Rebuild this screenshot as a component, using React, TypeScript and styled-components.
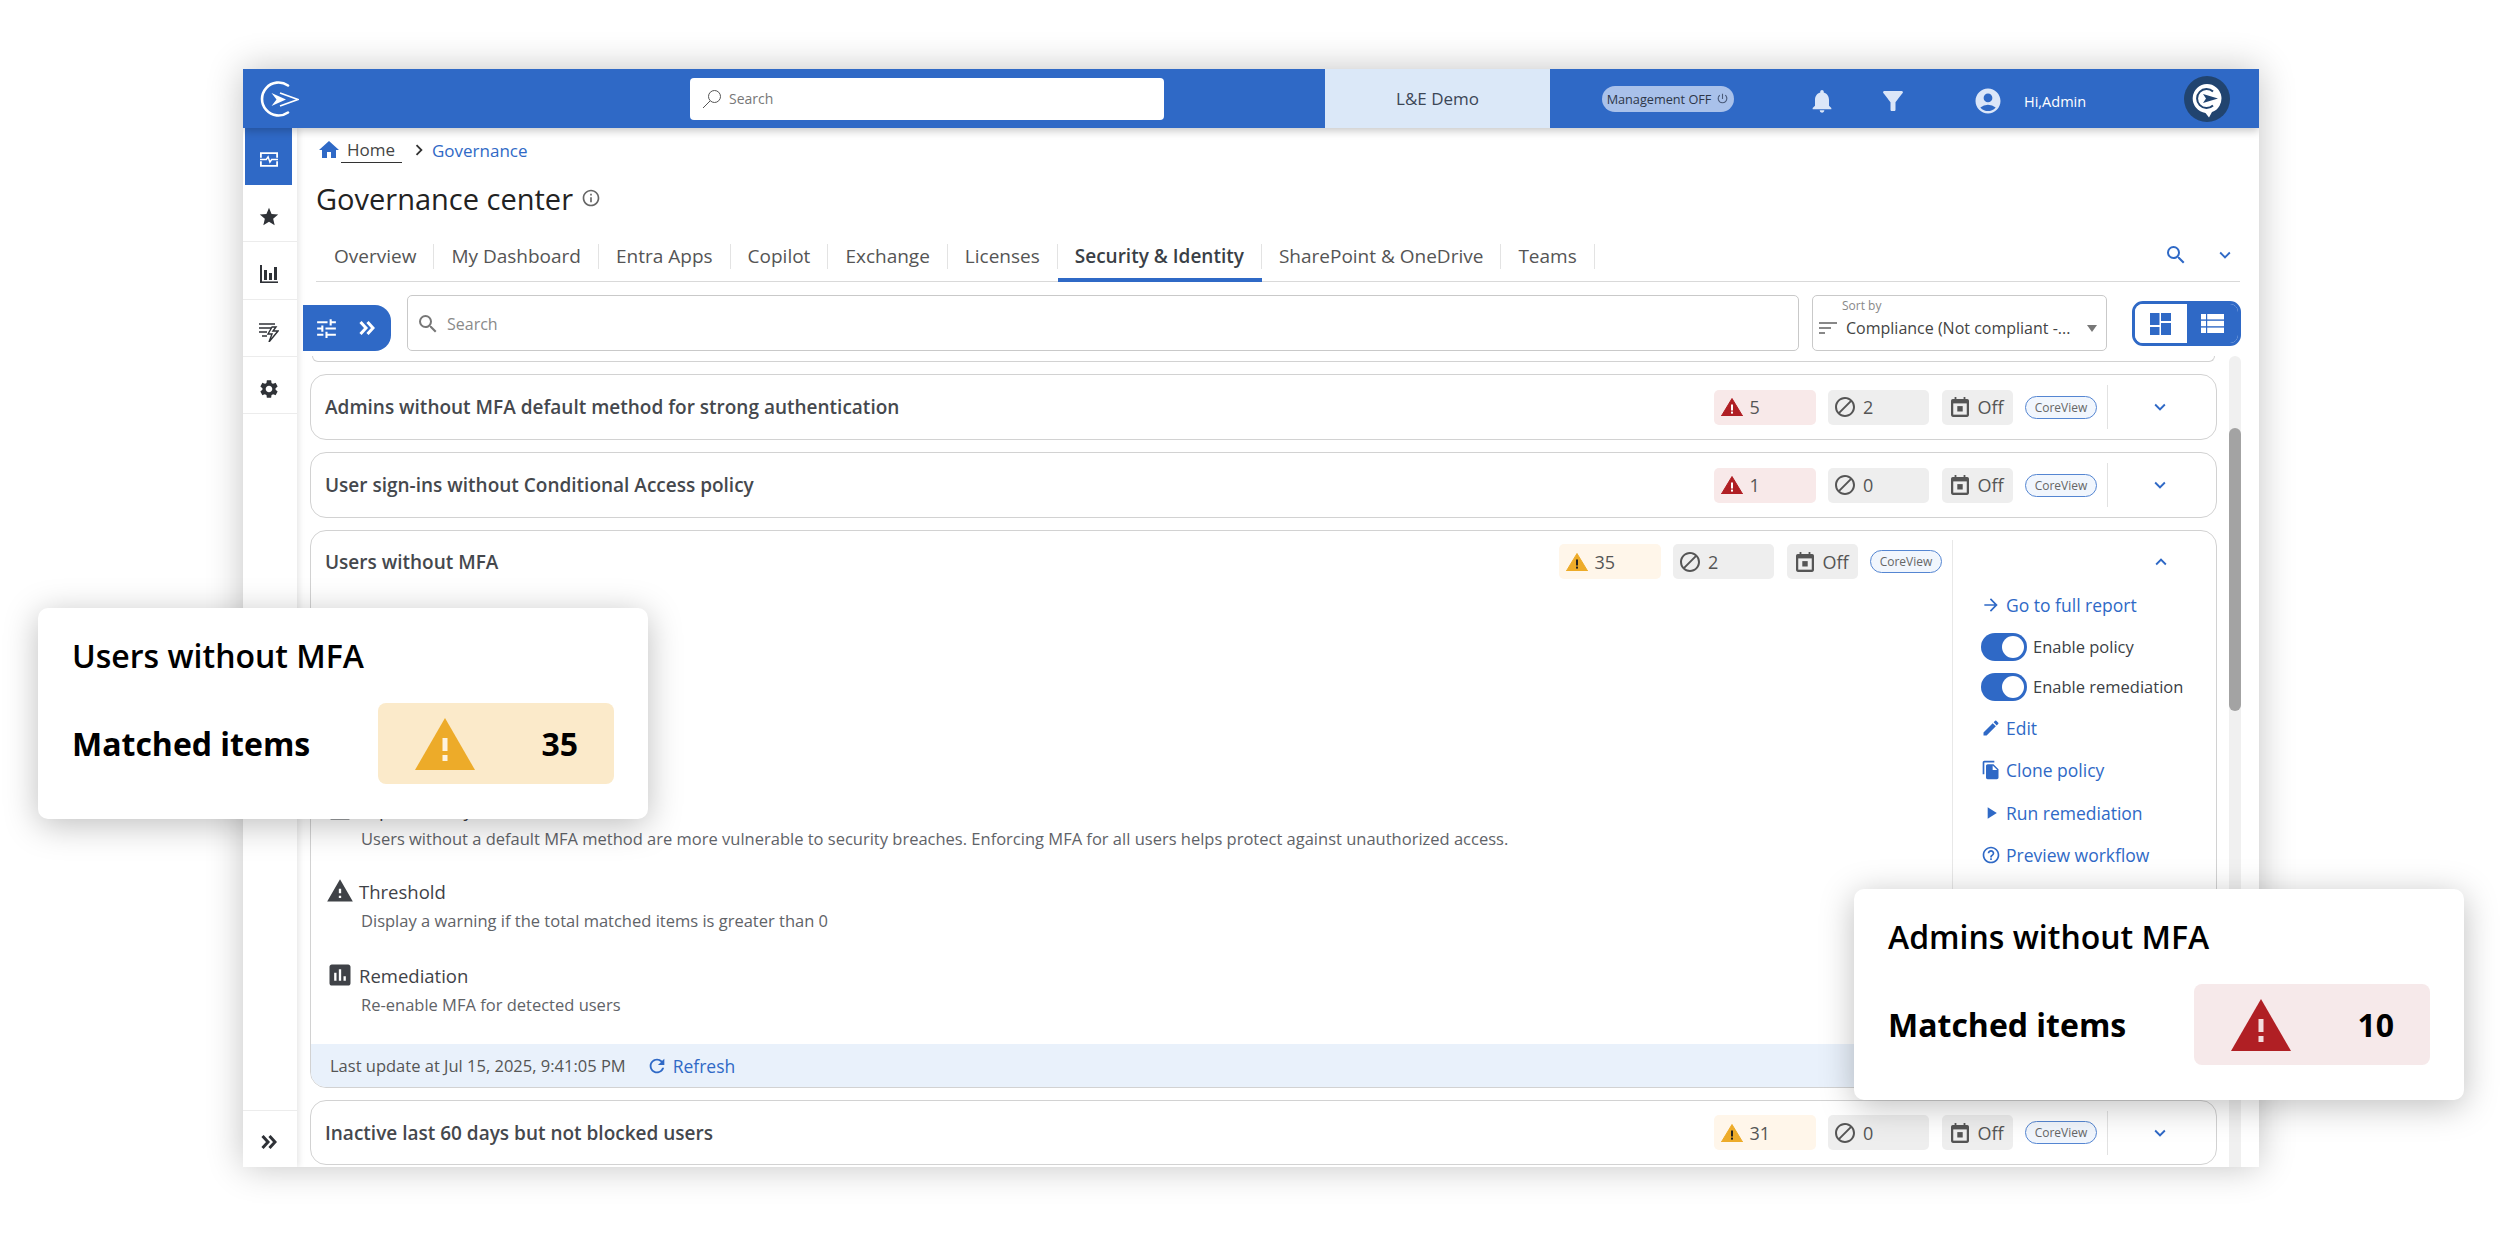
import React from "react";
import styled, { createGlobalStyle } from "styled-components";
import {
  MdHome, MdStar, MdSettings, MdNotifications, MdAccountCircle, MdEdit, MdFileCopy, MdPlayArrow,
  MdHelpOutline, MdArrowForward, MdRefresh, MdTune, MdSearch, MdFilterAlt,
  MdExpandMore, MdExpandLess, MdChevronRight, MdInfoOutline, MdAssessment, MdSort, MdBlock,
  MdPowerSettingsNew, MdWarning, MdArticle,
} from "react-icons/md";

const BLUE = "#2f69c6";

const Global = createGlobalStyle`
  html, body { margin: 0; padding: 0; background: #fff; }
  body { font-family: "Open Sans", "Liberation Sans", sans-serif; color: #333; }
  * { box-sizing: border-box; }
  svg { flex: none; }
`;

const Page = styled.div`
  position: relative;
  width: 2502px;
  height: 1236px;
  padding: 69px 0 0 243px;
  overflow: hidden;
  background: #fff;
`;
const Window = styled.div`
  width: 2016px;
  height: 1098px;
  display: flex;
  flex-direction: column;
  background: #fff;
  overflow: hidden;
  box-shadow: 0 0 34px rgba(0, 0, 0, 0.24);
`;
const TopBar = styled.header`
  position: relative;
  z-index: 3;
  flex: none;
  height: 59px;
  display: flex;
  align-items: center;
  background: ${BLUE};
  box-shadow: 0 3px 8px rgba(0, 0, 0, 0.22);
`;
const LogoBox = styled.div`
  width: 447px;
  padding-left: 16px;
  display: flex;
  align-items: center;
`;
const TopSearch = styled.div`
  width: 474px;
  height: 42px;
  background: #fff;
  border-radius: 4px;
  display: flex;
  align-items: center;
  gap: 7px;
  padding-left: 12px;
  font-size: 14px;
  color: #777;
`;
const Tenant = styled.div`
  margin-left: 161px;
  width: 225px;
  align-self: stretch;
  background: #dbe8f8;
  display: flex;
  align-items: center;
  justify-content: center;
  font-size: 17px;
  color: #3b4656;
`;
const MgmtPill = styled.div`
  margin-left: 52px;
  width: 132px;
  height: 26px;
  border-radius: 13px;
  background: #a9c1ea;
  display: flex;
  align-items: center;
  justify-content: center;
  gap: 5px;
  font-size: 12.7px;
  color: #2c3648;
  white-space: nowrap;
`;
const TopIcon = styled.div<{ $ml: number }>`
  margin-left: ${(p) => p.$ml}px;
  width: 28px;
  height: 32px;
  padding-top: 4px;
  display: flex;
  align-items: center;
  justify-content: center;
  color: #dbe6f8;
`;
const Hi = styled.div`
  margin-left: 22px;
  font-size: 14.5px;
  color: #fff;
  padding-top: 6px;
`;
const Avatar = styled.div`
  margin-left: auto;
  margin-right: 29px;
  width: 46px;
  height: 46px;
  border-radius: 50%;
  background: #21446f;
  display: flex;
  align-items: center;
  justify-content: center;
  padding-top: 3px;
`;
const Body = styled.div`
  flex: 1;
  min-height: 0;
  display: flex;
`;
const Sidebar = styled.nav`
  position: relative;
  z-index: 2;
  flex: none;
  width: 54px;
  display: flex;
  flex-direction: column;
  background: #fff;
  box-shadow: 2px 0 6px rgba(0, 0, 0, 0.1);
`;
const SideItem = styled.div<{ $active?: boolean }>`
  flex: none;
  height: 57.2px;
  margin-left: ${(p) => (p.$active ? "2px" : "0")};
  width: ${(p) => (p.$active ? "47px" : "54px")};
  padding: ${(p) => (p.$active ? "6px 0 0 0" : "8px 3px 0 0")};
  display: flex;
  align-items: center;
  justify-content: center;
  background: ${(p) => (p.$active ? BLUE : "transparent")};
  border-bottom: ${(p) => (p.$active ? "none" : "1px solid #ececec")};
  color: ${(p) => (p.$active ? "#fff" : "#2f3237")};
`;
const SideSpacer = styled.div`
  flex: 1;
`;
const SideFoot = styled.div`
  flex: none;
  height: 57px;
  border-top: 1px solid #ececec;
  padding: 6px 3px 0 0;
  display: flex;
  align-items: center;
  justify-content: center;
  color: #2f3237;
`;
const Main = styled.main`
  flex: 1;
  min-width: 0;
  display: flex;
  flex-direction: column;
`;
const Breadcrumb = styled.div`
  flex: none;
  height: 44px;
  padding-left: 20px;
  display: flex;
  align-items: center;
  font-size: 17px;
`;
const HomeLink = styled.span`
  width: 61px;
  padding-left: 6px;
  line-height: 24px;
  border-bottom: 1px solid #333;
  color: #444;
`;
const CrumbSep = styled.span`
  margin-left: 6px;
  display: flex;
  color: #333;
`;
const Crumb = styled.span`
  margin-left: 2px;
  color: ${BLUE};
`;
const Title = styled.div`
  flex: none;
  height: 52px;
  padding-left: 19px;
  display: flex;
  align-items: center;
  gap: 8px;
  font-size: 29px;
  color: #222;
`;
const Tabs = styled.div`
  flex: none;
  margin-left: 19px;
  padding-left: 1px;
  width: 1924px;
  height: 58px;
  border-bottom: 1px solid #d9d9d9;
  display: flex;
  align-items: flex-end;
`;
const Tab = styled.div<{ $active?: boolean }>`
  height: 38px;
  margin-bottom: -1px;
  font-size: 19px;
  font-weight: ${(p) => (p.$active ? 600 : 400)};
  color: ${(p) => (p.$active ? "#3a3f46" : "#555")};
  white-space: nowrap;
  border-bottom: 4px solid ${(p) => (p.$active ? BLUE : "transparent")};
`;
const TabLabel = styled.div`
  height: 25px;
  line-height: 25px;
  padding: 0 17px;
  border-right: 1px solid #e3e3e3;
`;
const TabTools = styled.div`
  margin-left: auto;
  align-self: center;
  display: flex;
  align-items: center;
  gap: 26px;
  padding: 4px 4px 0 0;
  color: ${BLUE};
`;
const Toolbar = styled.div`
  flex: none;
  height: 74px;
  padding: 13px 0 5px 6px;
  display: flex;
`;
const FilterBtn = styled.div`
  flex: none;
  align-self: flex-end;
  width: 88px;
  height: 46px;
  background: ${BLUE};
  border-radius: 0 16px 16px 0;
  color: #fff;
  display: flex;
  align-items: center;
  gap: 20px;
  padding-left: 11px;
`;
const SearchBox = styled.div`
  margin-left: 16px;
  width: 1392px;
  border: 1px solid #c9c9c9;
  border-radius: 5px;
  display: flex;
  align-items: center;
  gap: 7px;
  padding: 2px 0 0 8px;
  font-size: 16px;
  color: #8a8a8a;
`;
const SortBox = styled.div`
  margin-left: 13px;
  width: 295px;
  border: 1px solid #c9c9c9;
  border-radius: 5px;
  padding: 2px 9px 0 3px;
`;
const SortLabel = styled.div`
  margin-left: 26px;
  font-size: 12px;
  line-height: 16px;
  color: #888;
`;
const SortValue = styled.div`
  display: flex;
  align-items: center;
  font-size: 16px;
  line-height: 28px;
  color: #444;
  white-space: nowrap;
  gap: 6px;
`;
const Caret = styled.span`
  margin-left: auto;
  width: 0;
  height: 0;
  border-left: 5.5px solid transparent;
  border-right: 5.5px solid transparent;
  border-top: 7px solid #777;
`;
const ViewToggle = styled.div`
  margin: 6px 0 5px 25px;
  width: 109px;
  border: 3px solid ${BLUE};
  border-radius: 11px;
  display: flex;
  overflow: hidden;
`;
const ViewBtn = styled.div<{ $on?: boolean }>`
  flex: 1;
  display: flex;
  align-items: center;
  justify-content: center;
  background: ${(p) => (p.$on ? "#fff" : BLUE)};
`;
const Content = styled.div`
  flex: 1;
  min-height: 0;
  display: flex;
  padding-left: 13px;
`;
const List = styled.div`
  width: 1907px;
  display: flex;
  flex-direction: column;
`;
const ClippedCard = styled.div`
  flex: none;
  height: 6px;
  margin: 0 2px;
  border: 1px solid #d2d2d2;
  border-top: none;
  border-radius: 0 0 14px 14px;
`;
const RowCard = styled.div<{ $h?: number }>`
  flex: none;
  margin-top: 12px;
  height: ${(p) => p.$h ?? 66}px;
  border: 1px solid #d2d2d2;
  border-radius: 16px;
  display: flex;
  align-items: center;
  padding-left: 14px;
`;
const RowTitle = styled.div`
  flex: 1;
  font-size: 19px;
  font-weight: 600;
  color: #45484d;
  white-space: nowrap;
`;
const Badge = styled.div<{ $w: number; $bg: string; $pl: number; $gap: number }>`
  flex: none;
  width: ${(p) => p.$w}px;
  height: 35px;
  margin-right: 12.5px;
  background: ${(p) => p.$bg};
  border-radius: 5px;
  display: flex;
  align-items: center;
  gap: ${(p) => p.$gap}px;
  padding-left: ${(p) => p.$pl}px;
  font-size: 18px;
  color: #555;
`;
const CorePill = styled.div`
  flex: none;
  width: 72px;
  height: 23px;
  border: 1px solid #5586d2;
  border-radius: 12px;
  background: #f1f6fd;
  display: flex;
  align-items: center;
  justify-content: center;
  font-size: 12px;
  color: #666;
`;
const RowEnd = styled.div`
  flex: none;
  margin-left: 10px;
  width: 109px;
  height: 44px;
  padding-right: 4px;
  border-left: 1px solid #e2e2e2;
  display: flex;
  align-items: center;
  justify-content: center;
  color: ${BLUE};
`;
const OpenCard = styled.div`
  flex: none;
  margin-top: 12px;
  height: 558px;
  border: 1px solid #d2d2d2;
  border-radius: 16px;
  display: flex;
  flex-direction: column;
  overflow: hidden;
`;
const OpenMain = styled.div`
  flex: 1;
  min-height: 0;
  display: flex;
`;
const OpenLeft = styled.div`
  flex: 1;
  min-width: 0;
  display: flex;
  flex-direction: column;
`;
const OpenHead = styled.div`
  flex: none;
  height: 49px;
  margin-top: 13px;
  padding-left: 14px;
  display: flex;
  align-items: flex-start;
`;
const HeadTitle = styled(RowTitle)`
  line-height: 37px;
`;
const Pills = styled.div`
  display: flex;
  align-items: center;
  height: 35px;
  padding-right: 10px;
`;
const Section = styled.section<{ $first?: boolean }>`
  flex: none;
  height: 84px;
  padding: ${(p) => (p.$first ? "6px" : "0")} 0 0 15px;
`;
const SectionHead = styled.div<{ $first?: boolean }>`
  height: ${(p) => (p.$first ? 22 : 30)}px;
  display: flex;
  align-items: center;
  gap: 5px;
  font-size: 18.5px;
  font-weight: 500;
  color: #3f4247;
`;
const SectionText = styled.div<{ $first?: boolean }>`
  margin-top: ${(p) => (p.$first ? 4 : 0)}px;
  padding-left: 35px;
  font-size: 16.5px;
  line-height: 29px;
  color: #5f6368;
  white-space: nowrap;
`;
const Sections = styled.div`
  margin-top: auto;
`;
const Panel = styled.aside`
  flex: none;
  width: 264px;
  margin-top: 9px;
  border-left: 1px solid #e8e8e8;
  padding-left: 28px;
  display: flex;
  flex-direction: column;
`;
const PanelToggle = styled.div`
  flex: none;
  height: 44px;
  display: flex;
  align-items: center;
  padding-left: 169px;
  color: ${BLUE};
`;
const ActionRow = styled.div`
  flex: none;
  height: 42.5px;
  display: flex;
  align-items: center;
  gap: 5px;
  font-size: 17.5px;
  color: ${BLUE};
  white-space: nowrap;
`;
const ToggleRow = styled.div`
  flex: none;
  height: 40px;
  display: flex;
  align-items: center;
  gap: 6px;
  font-size: 16.5px;
  color: #3b3f45;
  white-space: nowrap;
`;
const Toggle = styled.span`
  flex: none;
  width: 46px;
  height: 28px;
  border-radius: 14px;
  background: ${BLUE};
  display: flex;
  align-items: center;
  justify-content: flex-end;
  padding-right: 3px;
`;
const Knob = styled.span`
  width: 22px;
  height: 22px;
  border-radius: 50%;
  background: #fff;
`;
const Foot = styled.div`
  flex: none;
  height: 43px;
  background: #e9f1fb;
  padding-left: 19px;
  display: flex;
  align-items: center;
  font-size: 16.5px;
  color: #555;
`;
const FootRefresh = styled.span`
  margin-left: 20px;
  display: flex;
  align-items: center;
  gap: 5px;
  font-size: 17.5px;
  color: ${BLUE};
`;
const Scrollbar = styled.div`
  flex: none;
  margin-left: 12px;
  width: 12px;
  background: #f0f0f0;
  border-radius: 6px 6px 0 0;
  padding-top: 72px;
`;
const Thumb = styled.div`
  height: 283px;
  background: #a3a3a3;
  border-radius: 6px;
`;
const Popup = styled.div<{ $left: number; $top: number }>`
  position: absolute;
  z-index: 5;
  left: ${(p) => p.$left}px;
  top: ${(p) => p.$top}px;
  width: 610px;
  height: 211px;
  background: #fff;
  border-radius: 10px;
  padding: 0 34px 0 34px;
  box-shadow: 0 6px 34px rgba(0, 0, 0, 0.26);
`;
const PopupTitle = styled.div`
  height: 95px;
  display: flex;
  align-items: center;
  font-size: 32px;
  font-weight: 600;
  color: #000;
`;
const PopupRow = styled.div`
  display: flex;
  align-items: center;
  justify-content: space-between;
`;
const PopupLabel = styled.div`
  font-size: 32px;
  font-weight: 700;
  color: #000;
`;
const PopupBadge = styled.div<{ $bg: string }>`
  width: 236px;
  height: 81px;
  background: ${(p) => p.$bg};
  border-radius: 8px;
  display: flex;
  align-items: center;
  justify-content: space-between;
  padding: 0 36px 0 37px;
  font-size: 32px;
  font-weight: 700;
  color: #000;
`;

const Logo = () => (
  <svg width="40" height="36" viewBox="0 0 40 36" fill="none">
    <path d="M29 4.5A16.5 16.5 0 1 0 29 31.5" stroke="#fff" strokeWidth="2.6" strokeLinecap="round" />
    <path d="M21 12L39 18.5L21 25" stroke="#fff" strokeWidth="1.8" strokeLinejoin="miter" />
    <path d="M12.5 12L27 18.5L12.5 25L17.5 18.5Z" fill="#fff" />
  </svg>
);
const AvatarIcon = () => (
  <svg width="32" height="35" viewBox="0 0 32 35">
    <path d="M16 1a14.5 14.5 0 0 1 5 28.1L18 34.5L14.5 29.9A14.5 14.5 0 0 1 16 1Z" fill="#fff" />
    <path d="M22 8.5A9.5 9.5 0 1 0 22 22.5" stroke="#21446f" strokeWidth="2" fill="none" />
    <path d="M12 11L27 15.5L12 20L15 15.5Z" fill="#21446f" />
  </svg>
);
const ThinSearch = () => (
  <svg width="20" height="20" viewBox="0 0 20 20" fill="none" stroke="#555" strokeWidth="1">
    <ellipse cx="12.5" cy="7.5" rx="6" ry="6" />
    <path d="M8 12 L1 19" />
  </svg>
);
const DoubleChevron = ({ color }: { color: string }) => (
  <svg width="16" height="14" viewBox="0 0 16 14" fill="none" stroke={color} strokeWidth="3">
    <path d="M1.5 1L7 7L1.5 13M8.5 1L14 7L8.5 13" />
  </svg>
);
const PulseIcon = () => (
  <svg width="18" height="15" viewBox="0 0 20 16" fill="none" stroke="#fff" strokeWidth="2">
    <path d="M1 6V1H19V6M1 10V15H19V10" />
    <path d="M0 8H7L9 5L11 11L13 8H20" strokeWidth="1.6" />
  </svg>
);
const BarsIcon = () => (
  <svg width="18" height="18" viewBox="0 0 18 18" fill="#2f3237">
    <rect x="0" y="0" width="2" height="18" />
    <rect x="0" y="16.4" width="18" height="1.6" />
    <rect x="4" y="5" width="3" height="10" />
    <rect x="9" y="8" width="3" height="7" />
    <rect x="14" y="2" width="3" height="13" />
  </svg>
);
const RulesIcon = () => (
  <svg width="20" height="20" viewBox="0 0 20 20" fill="none" stroke="#2f3237" strokeWidth="1.4">
    <path d="M0 2H16M0 6H12M0 10H8M3 14H8" />
    <path d="M13 5 L9 12H13L10 20L19 9H14L17 5Z" fill="#fff" />
  </svg>
);
const CalIcon = () => (
  <svg width="18" height="20" viewBox="0 0 20 22" fill="#555">
    <path d="M4 0H6V2H14V0H16V2H18a2 2 0 0 1 2 2V20a2 2 0 0 1-2 2H2a2 2 0 0 1-2-2V4a2 2 0 0 1 2-2H4Z" />
    <rect x="2.5" y="7" width="15" height="12.5" fill="#eeeeee" />
    <rect x="7" y="10" width="6" height="6" />
  </svg>
);
const Tri = ({ w, h, color }: { w: number; h: number; color: string }) => (
  <svg width={w} height={h} viewBox="0 0 60 52">
    <path d="M30 0L60 52H0Z" fill={color} />
    <rect x="27.5" y="20" width="5" height="13" fill="#fff" opacity="0.85" />
    <rect x="27.5" y="37" width="5" height="6" fill="#fff" opacity="0.85" />
  </svg>
);
const SmallTri = ({ color, mark }: { color: string; mark: string }) => (
  <svg width="22" height="18" viewBox="0 0 22 18">
    <path d="M11 0.5L21.6 18H0.4Z" fill={color} stroke={color} strokeLinejoin="round" />
    <rect x="10" y="6.5" width="2" height="6" fill={mark} />
    <rect x="10" y="13.6" width="2" height="2" fill={mark} />
  </svg>
);
const GridIcon = () => (
  <svg width="21" height="22" viewBox="0 0 21 22" fill={BLUE}>
    <rect x="0" y="0" width="9.5" height="12" />
    <rect x="11" y="0" width="10" height="8" />
    <rect x="0" y="14" width="9.5" height="8" />
    <rect x="11" y="10" width="10" height="12" />
  </svg>
);
const ListIcon = () => (
  <svg width="23" height="19" viewBox="0 0 23 19" fill="#fff">
    <rect x="0" y="0" width="5" height="5.4" />
    <rect x="6.2" y="0" width="16.8" height="5.4" />
    <rect x="0" y="6.8" width="5" height="5.4" />
    <rect x="6.2" y="6.8" width="16.8" height="5.4" />
    <rect x="0" y="13.6" width="5" height="5.4" />
    <rect x="6.2" y="13.6" width="16.8" height="5.4" />
  </svg>
);

const COLORS = {
  red: { bg: "#f8e9e9", tri: "#b01f24", mark: "#fff" },
  amber: { bg: "#fff6ea", tri: "#edab29", mark: "#222" },
};

const Pillset = ({ tone, n, b }: { tone: "red" | "amber"; n: number; b: number }) => (
  <>
    <Badge $w={102} $bg={COLORS[tone].bg} $pl={7} $gap={7}>
      <SmallTri color={COLORS[tone].tri} mark={COLORS[tone].mark} />
      {n}
    </Badge>
    <Badge $w={101} $bg="#eeeeee" $pl={5} $gap={6}>
      <MdBlock size={24} color="#555" />
      {b}
    </Badge>
    <Badge $w={71} $bg="#eeeeee" $pl={9} $gap={9}>
      <CalIcon />
      Off
    </Badge>
    <CorePill>CoreView</CorePill>
  </>
);

const Row = ({ title, tone, n, b, h }: { title: string; tone: "red" | "amber"; n: number; b: number; h?: number }) => (
  <RowCard $h={h}>
    <RowTitle>{title}</RowTitle>
    <Pillset tone={tone} n={n} b={b} />
    <RowEnd>
      <MdExpandMore size={22} />
    </RowEnd>
  </RowCard>
);

const tabs = ["Overview", "My Dashboard", "Entra Apps", "Copilot", "Exchange", "Licenses", "Security & Identity", "SharePoint & OneDrive", "Teams"];

const Callout = ({ left, top, title, n, bg, color }: { left: number; top: number; title: string; n: number; bg: string; color: string }) => (
  <Popup $left={left} $top={top}>
    <PopupTitle>{title}</PopupTitle>
    <PopupRow>
      <PopupLabel>Matched items</PopupLabel>
      <PopupBadge $bg={bg}>
        <Tri w={60} h={52} color={color} />
        <span>{n}</span>
      </PopupBadge>
    </PopupRow>
  </Popup>
);

export default function App() {
  return (
    <Page>
      <Global />
      <Window>
        <TopBar>
          <LogoBox>
            <Logo />
          </LogoBox>
          <TopSearch>
            <ThinSearch />
            Search
          </TopSearch>
          <Tenant>L&amp;E Demo</Tenant>
          <MgmtPill>
            Management OFF
            <MdPowerSettingsNew size={13} color="#4a5a78" />
          </MgmtPill>
          <TopIcon $ml={74}>
            <MdNotifications size={28} />
          </TopIcon>
          <TopIcon $ml={43}>
            <MdFilterAlt size={30} />
          </TopIcon>
          <TopIcon $ml={67}>
            <MdAccountCircle size={30} />
          </TopIcon>
          <Hi>Hi,Admin</Hi>
          <Avatar>
            <AvatarIcon />
          </Avatar>
        </TopBar>
        <Body>
          <Sidebar>
            <SideItem $active>
              <PulseIcon />
            </SideItem>
            <SideItem>
              <MdStar size={22} />
            </SideItem>
            <SideItem>
              <BarsIcon />
            </SideItem>
            <SideItem>
              <RulesIcon />
            </SideItem>
            <SideItem>
              <MdSettings size={22} />
            </SideItem>
            <SideSpacer />
            <SideFoot>
              <DoubleChevron color="#2f3237" />
            </SideFoot>
          </Sidebar>
          <Main>
            <Breadcrumb>
              <MdHome size={24} color={BLUE} />
              <HomeLink>Home</HomeLink>
              <CrumbSep>
                <MdChevronRight size={22} />
              </CrumbSep>
              <Crumb>Governance</Crumb>
            </Breadcrumb>
            <Title>
              Governance center
              <MdInfoOutline size={20} color="#666" />
            </Title>
            <Tabs>
              {tabs.map((t) => (
                <Tab key={t} $active={t === "Security & Identity"}>
                  <TabLabel>{t}</TabLabel>
                </Tab>
              ))}
              <TabTools>
                <MdSearch size={24} />
                <MdExpandMore size={22} />
              </TabTools>
            </Tabs>
            <Toolbar>
              <FilterBtn>
                <MdTune size={25} />
                <DoubleChevron color="#fff" />
              </FilterBtn>
              <SearchBox>
                <MdSearch size={24} color="#777" />
                Search
              </SearchBox>
              <SortBox>
                <SortLabel>Sort by</SortLabel>
                <SortValue>
                  <MdSort size={24} color="#888" />
                  Compliance (Not compliant -...
                  <Caret />
                </SortValue>
              </SortBox>
              <ViewToggle>
                <ViewBtn $on>
                  <GridIcon />
                </ViewBtn>
                <ViewBtn>
                  <ListIcon />
                </ViewBtn>
              </ViewToggle>
            </Toolbar>
            <Content>
              <List>
                <ClippedCard />
                <Row title="Admins without MFA default method for strong authentication" tone="red" n={5} b={2} />
                <Row title="User sign-ins without Conditional Access policy" tone="red" n={1} b={0} />
                <OpenCard>
                  <OpenMain>
                    <OpenLeft>
                      <OpenHead>
                        <HeadTitle>Users without MFA</HeadTitle>
                        <Pills>
                          <Pillset tone="amber" n={35} b={2} />
                        </Pills>
                      </OpenHead>
                      <Sections>
                        <Section $first>
                          <SectionHead $first>
                            <MdArticle size={28} color="#3f4247" />
                            Explainability
                          </SectionHead>
                          <SectionText $first>
                            Users without a default MFA method are more vulnerable to security breaches. Enforcing MFA for all users helps protect against unauthorized access.
                          </SectionText>
                        </Section>
                        <Section>
                          <SectionHead>
                            <MdWarning size={28} color="#3f4247" />
                            Threshold
                          </SectionHead>
                          <SectionText>Display a warning if the total matched items is greater than 0</SectionText>
                        </Section>
                        <Section>
                          <SectionHead>
                            <MdAssessment size={28} color="#3f4247" />
                            Remediation
                          </SectionHead>
                          <SectionText>Re-enable MFA for detected users</SectionText>
                        </Section>
                      </Sections>
                    </OpenLeft>
                    <Panel>
                      <PanelToggle>
                        <MdExpandLess size={22} />
                      </PanelToggle>
                      <ActionRow>
                        <MdArrowForward size={20} />
                        Go to full report
                      </ActionRow>
                      <ToggleRow>
                        <Toggle>
                          <Knob />
                        </Toggle>
                        Enable policy
                      </ToggleRow>
                      <ToggleRow>
                        <Toggle>
                          <Knob />
                        </Toggle>
                        Enable remediation
                      </ToggleRow>
                      <ActionRow>
                        <MdEdit size={20} />
                        Edit
                      </ActionRow>
                      <ActionRow>
                        <MdFileCopy size={20} />
                        Clone policy
                      </ActionRow>
                      <ActionRow>
                        <MdPlayArrow size={20} />
                        Run remediation
                      </ActionRow>
                      <ActionRow>
                        <MdHelpOutline size={20} />
                        Preview workflow
                      </ActionRow>
                    </Panel>
                  </OpenMain>
                  <Foot>
                    Last update at Jul 15, 2025, 9:41:05 PM
                    <FootRefresh>
                      <MdRefresh size={22} />
                      Refresh
                    </FootRefresh>
                  </Foot>
                </OpenCard>
                <Row title="Inactive last 60 days but not blocked users" tone="amber" n={31} b={0} h={65} />
              </List>
              <Scrollbar>
                <Thumb />
              </Scrollbar>
            </Content>
          </Main>
        </Body>
      </Window>
      <Callout left={38} top={608} title="Users without MFA" n={35} bg="#fbeaca" color="#edab29" />
      <Callout left={1854} top={889} title="Admins without MFA" n={10} bg="#f6e9ea" color="#b01f24" />
    </Page>
  );
}
